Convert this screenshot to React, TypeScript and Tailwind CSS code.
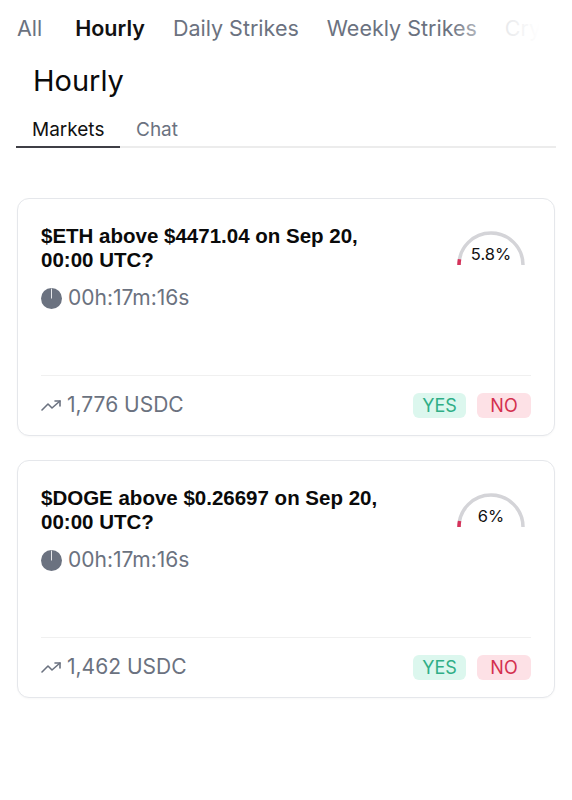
import React from "react";

function Gauge({ pct, label }: { pct: number; label: string }) {
  const r = 32;
  const cx = 36;
  const cy = 36;
  const len = Math.PI * r;
  return (
    <div className="relative w-[72px] h-[40px]">
      <svg width="72" height="40" viewBox="0 0 72 40">
        <path d={`M ${cx - r} ${cy} A ${r} ${r} 0 0 1 ${cx + r} ${cy}`} fill="none" stroke="#d4d4d8" strokeWidth="3.5" />
        <path
          d={`M ${cx - r} ${cy} A ${r} ${r} 0 0 1 ${cx + r} ${cy}`}
          fill="none"
          stroke="#d6325a"
          strokeWidth="3.5"
          strokeDasharray={`${(len * pct) / 100} ${len}`}
        />
      </svg>
      <div className="absolute left-0 right-0 top-[17px] text-center text-[16.5px] text-[#111] leading-none">{label}</div>
    </div>
  );
}

function Clock() {
  return (
    <svg width="21" height="21" viewBox="0 0 20 20">
      <circle cx="10" cy="10" r="10" fill="#6b7280" />
      <line x1="10" y1="0.5" x2="10" y2="10" stroke="#ffffff" strokeWidth="0.8" />
    </svg>
  );
}

function Trend() {
  return (
    <svg width="22" height="14" viewBox="0 0 22 14" fill="none" stroke="#6b7280" strokeWidth="1.6" strokeLinecap="round" strokeLinejoin="round">
      <polyline points="1,12 7,6 11,10 19,3" />
      <polyline points="14,3 19,3 19,8" />
    </svg>
  );
}

function Card({ title1, title2, pct, label, volume }: { title1: string; title2: string; pct: number; label: string; volume: string }) {
  return (
    <div className="border border-[#e5e7eb] rounded-[12px] bg-white px-[23px] pt-[25px] pb-[17px] shadow-[0_1px_2px_rgba(0,0,0,0.03)]">
      <div className="flex justify-between items-start">
        <div className="text-[20.5px] font-bold leading-[24px] text-[#0a0a0a] font-['Liberation_Sans',sans-serif]">
          <div>{title1}</div>
          <div>{title2}</div>
        </div>
        <div className="mr-[4px] mt-[5px]">
          <Gauge pct={pct} label={label} />
        </div>
      </div>
      <div className="flex items-center gap-[6px] mt-[14px] h-[24px] text-[21px] text-[#6b7280]">
        <Clock />
        <span>00h:17m:16s</span>
      </div>
      <div className="h-px bg-[#f0f0f0] mt-[65px]" />
      <div className="flex justify-between items-center mt-[16px] h-[26px]">
        <div className="flex items-center gap-[4px] text-[21px] text-[#6b7280]">
          <Trend />
          <span>{volume}</span>
        </div>
        <div className="flex gap-[11px]">
          <div className="w-[53px] h-[25px] rounded-[6px] bg-[#dcf7ee] text-[#2fae86] text-[18px] flex items-center justify-center">YES</div>
          <div className="w-[54px] h-[25px] rounded-[6px] bg-[#fde1e6] text-[#d4304f] text-[18px] flex items-center justify-center">NO</div>
        </div>
      </div>
    </div>
  );
}

export default function App() {
  return (
    <div className="w-[572px] h-[800px] bg-white font-['Inter',sans-serif] overflow-hidden">
      <div className="relative overflow-hidden pt-[13px] pl-[17px] w-[540px]">
        <div className="flex gap-[28px] text-[21.5px] text-[#6b7280] whitespace-nowrap leading-[30px]">
          <span className="mr-[5px]">All</span>
          <span className="font-semibold text-[#111]">Hourly</span>
          <span>Daily Strikes</span>
          <span>Weekly Strikes</span>
          <span>Crypto</span>
        </div>
        <div className="absolute top-0 right-0 h-full w-[90px] bg-gradient-to-r from-transparent via-white/80 to-white" />
      </div>
      <div className="px-[33px] mt-[20px] text-[29px] text-[#0a0a0a] leading-[36px]">Hourly</div>
      <div className="mx-[16px] mt-[20px] flex border-b-2 border-[#ececec]">
        <div className="w-[104px] pl-[16px] pb-[5px] leading-[22px] text-[19px] text-[#111] border-b-2 border-[#3f3f46] -mb-[2px]">Markets</div>
        <div className="pl-[16px] pb-[5px] leading-[22px] text-[19px] text-[#6b7280]">Chat</div>
      </div>
      <div className="px-[17px] mt-[50px] flex flex-col gap-[24px]">
        <Card title1="$ETH above $4471.04 on Sep 20," title2="00:00 UTC?" pct={5.8} label="5.8%" volume="1,776 USDC" />
        <Card title1="$DOGE above $0.26697 on Sep 20," title2="00:00 UTC?" pct={6} label="6%" volume="1,462 USDC" />
      </div>
    </div>
  );
}
